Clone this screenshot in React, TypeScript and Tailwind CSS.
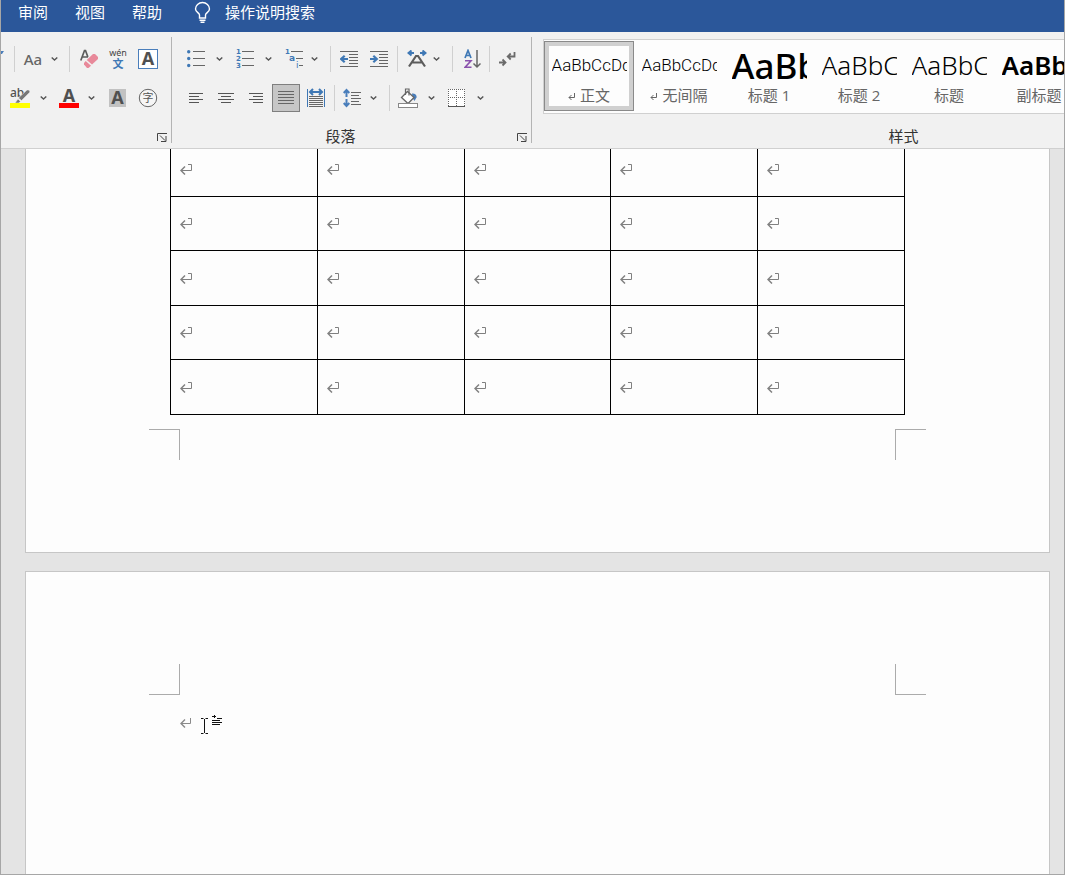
import type { ReactNode } from "react";
import clsx from "clsx";

const TABS = ["审阅", "视图", "帮助"];

const STYLES = [
  { name: "正文", sample: "AaBbCcDd", mark: true, selected: true, font: "font-[Roboto] text-[17px] font-light" },
  { name: "无间隔", sample: "AaBbCcDd", mark: true, font: "font-[Roboto] text-[17px] font-light" },
  { name: "标题 1", sample: "AaBbCc", font: "font-['Noto_Sans'] text-[35px] font-medium" },
  { name: "标题 2", sample: "AaBbCc", font: "font-['Noto_Sans'] text-[26px] font-light" },
  { name: "标题", sample: "AaBbCc", font: "font-['Noto_Sans'] text-[26px] font-light" },
  { name: "副标题", sample: "AaBbCc", font: "font-['Noto_Sans'] text-[26px] font-semibold" },
];

const ROWS = [47, 54, 55, 54, 55];

export default function App() {
  return (
    <div className="flex min-h-screen flex-col overflow-hidden border-x border-b border-[#a6a6a6] bg-[#e4e4e4] font-['Open_Sans','Noto_Sans_CJK_SC',sans-serif]">
      <MenuBar />
      <Ribbon />
      <Document />
    </div>
  );
}

function MenuBar() {
  return (
    <nav className="flex h-8 items-center bg-[#2b579a] pb-2 pl-[17px] text-[15px] leading-6 text-white">
      <div className="flex gap-[27px]">
        {TABS.map((tab) => (
          <button key={tab} type="button">
            {tab}
          </button>
        ))}
      </div>
      <button type="button" className="ml-8 flex items-center gap-[14px]">
        <svg width="17" height="22" viewBox="0 0 17 22" fill="none" stroke="white" strokeWidth="1.4">
          <path d="M5.5 17v-3C5.5 12 1.500 11 1.500 8a7 6.500 0 0 1 14 0c0 3-4 4-4 6V17z" />
          <path d="M5.500 19.300h6M6.500 21.300h4" />
        </svg>
        <span>操作说明搜索</span>
      </button>
    </nav>
  );
}

function Ribbon() {
  return (
    <div className="flex h-[117px] border-b border-[#d0d0d0] bg-[#f1f1f1] pt-[5px]">
      <FontGroup />
      <ParagraphGroup />
      <StylesGroup />
    </div>
  );
}

/* Font group */

function FontGroup() {
  return (
    <section className="h-[106px] w-[171px] shrink-0 border-r border-[#b4b4b4]">
      <div className="mt-2 flex h-7 items-center">
        <svg width="3" height="16" viewBox="0 0 3 16">
          <path d="M0 0h3L1 3H0z" fill="#4a7ebb" />
        </svg>
        <Separator className="ml-[10px]" />
        <Tool label="更改大小写" className="w-[36px]">
          <span className="font-['Noto_Sans'] text-[15px] font-medium leading-5 text-[#666]">Aa</span>
        </Tool>
        <Chevron label="大小写选项" className="w-[7px]" />
        <Separator className="ml-[11px]" />
        <Tool label="清除所有格式" className="ml-1 w-[30px]">
          <svg width="20" height="20" viewBox="0 0 20 20">
            <path d="M1.800 11.500L5.500 1.500h1l3.700 10M3.300 8h5.400" fill="none" stroke="#5c5c5c" strokeWidth="1.700" />
            <path d="M12.500 4L19.500 9.500l-9 9.500H7.500L3.500 15z" fill="#f1f1f1" />
            <path d="M14 5h2l3 3v2L13 15.500 7.700 10.900z" fill="#e8899a" />
            <path d="M6.700 12L12 16.700l-2.500 2.300H8l-3-3.500v-1.500z" fill="#e8899a" />
          </svg>
        </Tool>
        <Tool label="拼音指南" className="w-[28px]">
          <svg width="20" height="22" viewBox="0 0 20 22">
            <text x="10" y="8" textAnchor="middle" fontSize="9" fill="#444" fontFamily="Noto Sans">
              wén
            </text>
            <text x="10" y="20" textAnchor="middle" fontSize="11" fill="#3f78b5" fontWeight="700" fontFamily="Noto Sans CJK SC">
              文
            </text>
          </svg>
        </Tool>
        <Tool label="字符边框" className="w-8">
          <svg width="20" height="20" viewBox="0 0 20 20">
            <rect x="0.500" y="0.500" width="19" height="19" fill="#fff" stroke="#4a7ebb" />
            <LetterA x={10} y={16} />
          </svg>
        </Tool>
      </div>
      <div className="mt-[11px] flex h-7 items-center">
        <Tool label="文本突出显示颜色" className="ml-1 w-[30px]">
          <svg width="20" height="20" viewBox="0 0 20 20">
            <text x="0" y="9" fontSize="12" fill="#505050" fontWeight="500" fontFamily="Noto Sans">
              ab
            </text>
            <path d="M19 2l1 2-8.500 8.500-3-2.500L17 2zM8 11l2.500 2.500-2 1.500H5z" fill="#777" stroke="#f1f1f1" strokeWidth="0.500" />
            <rect y="15" width="20" height="5" fill="#ff0" />
          </svg>
        </Tool>
        <Chevron label="突出显示选项" className="w-[17px]" />
        <Tool label="字体颜色" className="w-[34px]">
          <svg width="20" height="20" viewBox="0 0 20 20">
            <LetterA x={10} y={14} />
            <rect y="15" width="20" height="5" fill="#f00" />
          </svg>
        </Tool>
        <Chevron label="字体颜色选项" className="w-[11px]" />
        <Tool label="字符底纹" className="ml-[6px] w-[28px]">
          <svg width="17" height="18" viewBox="0 0 17 18">
            <rect width="17" height="18" fill="#c2c2c2" />
            <LetterA x={8.5} y={15} />
          </svg>
        </Tool>
        <Tool label="带圈字符" className="ml-px w-8">
          <svg width="20" height="20" viewBox="0 0 20 20">
            <circle cx="10" cy="10" r="8.700" fill="#fff" fillOpacity="0.400" stroke="#666" />
            <text x="10" y="14" textAnchor="middle" fontSize="11" fill="#555" fontFamily="Noto Sans CJK SC">
              字
            </text>
          </svg>
        </Tool>
      </div>
      <GroupFooter />
    </section>
  );
}

function LetterA({ x, y }: { x: number; y: number }) {
  return (
    <text x={x} y={y} textAnchor="middle" fontSize="18" fontWeight="700" fill="#505050" fontFamily="Noto Sans">
      A
    </text>
  );
}

/* Paragraph group */

function ParagraphGroup() {
  return (
    <section className="h-[106px] w-[360px] shrink-0 border-r border-[#b4b4b4]">
      <div className="mt-2 flex h-7 items-center">
        <Tool label="项目符号" className="ml-2 w-8">
          <svg width="18" height="18" viewBox="0 0 18 18">
            <g fill="#3f78b5">
              <circle cx="1.700" cy="1.700" r="1.700" />
              <circle cx="1.700" cy="8.500" r="1.700" />
              <circle cx="1.700" cy="15.500" r="1.700" />
            </g>
            <path d="M6 1.500h12M6 8.500h12M6 15.500h12" stroke="#666" />
          </svg>
        </Tool>
        <Chevron label="项目符号选项" className="w-[14px]" />
        <Tool label="编号" className="ml-1 w-[30px]">
          <svg width="18" height="20" viewBox="0 0 18 20">
            <g fontSize="7" fontWeight="700" fill="#3f78b5" fontFamily="DejaVu Sans">
              <text x="0" y="5">1</text>
              <text x="0" y="12">2</text>
              <text x="0" y="19">3</text>
            </g>
            <path d="M6 2.500h12M6 9.500h12M6 16.500h12" stroke="#666" />
          </svg>
        </Tool>
        <Chevron label="编号选项" className="w-4" />
        <Tool label="多级列表" className="ml-1 w-[28px]">
          <svg width="19" height="20" viewBox="0 0 19 20">
            <g fontSize="9" fontWeight="700" fill="#3f78b5" fontFamily="DejaVu Sans">
              <text x="0" y="5" fontSize="7">1</text>
              <text x="4" y="12">a</text>
              <text x="11" y="19" fontWeight="400">i</text>
            </g>
            <path d="M6 2.500h12M11 9.500h7M14 16.500h4" stroke="#666" />
          </svg>
        </Tool>
        <Chevron label="多级列表选项" className="w-3" />
        <Separator className="ml-[10px]" />
        <Tool label="减少缩进量" className="ml-[3px] w-[30px]">
          <svg width="18" height="18" viewBox="0 0 18 18" fill="none">
            <path d="M0 1.500h18M9 4.500h9M9 7.500h9M9 10.500h9M9 13.500h9M0 16.500h18" stroke="#666" />
            <path d="M8 9H2M4.700 5.700L1.200 9l3.500 3.300" stroke="#3f78b5" strokeWidth="2.200" />
          </svg>
        </Tool>
        <Tool label="增加缩进量" className="w-[30px]">
          <svg width="18" height="18" viewBox="0 0 18 18" fill="none">
            <path d="M0 1.500h18M9 4.500h9M9 7.500h9M9 10.500h9M9 13.500h9M0 16.500h18" stroke="#666" />
            <path d="M0 9h6M3.300 5.700L6.800 9l-3.500 3.300" stroke="#3f78b5" strokeWidth="2.200" />
          </svg>
        </Tool>
        <Separator className="ml-[3px]" />
        <Tool label="中文版式" className="ml-1 w-[30px]">
          <svg width="20" height="18" viewBox="0 0 20 18" fill="none">
            <path d="M7 3H2M4.500 0.500L1.500 3l3 2.500M13 3h5M15.500 0.500l3 2.500-3 2.500" stroke="#3f78b5" strokeWidth="2" />
            <path d="M2 16.500L9 6h2l7 10.500M5 12.500h10" stroke="#5c5c5c" strokeWidth="2.200" />
          </svg>
        </Tool>
        <Chevron label="中文版式选项" className="w-2" />
        <Separator className="ml-3" />
        <Tool label="排序" className="ml-1 w-[30px]">
          <svg width="17" height="20" viewBox="0 0 17 20" fill="none">
            <path d="M1 9L4 1.500 7 9M2 6.500h4" stroke="#3f78b5" strokeWidth="1.700" />
            <path d="M1 11.800h6L1.200 18.200H7.500" stroke="#8a52ad" strokeWidth="1.600" />
            <path d="M13 1v17M9.500 14.500L13 18l3.500-3.500" stroke="#666" strokeWidth="1.500" />
          </svg>
        </Tool>
        <Separator className="ml-[2px]" />
        <Tool label="显示/隐藏编辑标记" className="ml-[2px] w-[30px]">
          <svg width="17" height="16" viewBox="0 0 17 16" fill="none" stroke="#6a6a6a" strokeWidth="1.800">
            <path d="M15.500 1v4.500H9M11.700 2.500L8.700 5.500l3 3M0 11.500h6M3.500 8.500l3 3-3 3" />
          </svg>
        </Tool>
      </div>
      <div className="mt-[11px] flex h-7 items-center">
        <Tool label="左对齐" className="ml-[9px] w-[30px]">
          <svg width="16" height="12" viewBox="0 0 16 12">
            <path d="M1 1.500h14M1 4.500h10M1 7.500h14M1 10.500h10" stroke="#555" />
          </svg>
        </Tool>
        <Tool label="居中" className="w-[30px]">
          <svg width="16" height="12" viewBox="0 0 16 12">
            <path d="M0 1.500h16M3 4.500h10M0 7.500h16M3 10.500h10" stroke="#555" />
          </svg>
        </Tool>
        <Tool label="右对齐" className="w-[30px]">
          <svg width="16" height="12" viewBox="0 0 16 12">
            <path d="M1 1.500h14M5 4.500h10M1 7.500h14M5 10.500h10" stroke="#555" />
          </svg>
        </Tool>
        <Tool label="两端对齐" className="ml-px w-7 border border-[#7f7f7f] bg-[#c6c6c6]">
          <svg width="16" height="14" viewBox="0 0 16 14">
            <path d="M0 0.500h16M0 3.500h16M0 6.500h16M0 9.500h16M0 12.500h16" stroke="#666" />
          </svg>
        </Tool>
        <Tool label="分散对齐" className="ml-px w-[30px]">
          <svg width="18" height="20" viewBox="0 0 18 20" fill="none">
            <path d="M0.500 1v18M17.500 1v18" stroke="#3f78b5" />
            <path d="M3 4h12M6 1L3 4l3 3M12 1l3 3-3 3" stroke="#3f78b5" strokeWidth="2" />
            <path d="M2 8.500h14M2 10.500h14M2 12.500h14M2 14.500h14M2 16.500h14M2 18.500h14" stroke="#666" />
          </svg>
        </Tool>
        <Separator className="ml-[3px]" />
        <Tool label="行和段落间距" className="ml-[2px] w-[30px]">
          <svg width="18" height="20" viewBox="0 0 18 20" fill="none">
            <path d="M3.500 2v16M0.700 5l2.800-3 2.800 3M0.700 15l2.800 3 2.800-3" stroke="#4a7ebb" strokeWidth="2" />
            <path d="M3.500 9v2" stroke="#f1f1f1" strokeWidth="3" />
            <path d="M8 4.500h10M8 7.500h8M8 10.500h10M8 13.500h8M8 16.500h10" stroke="#666" />
          </svg>
        </Tool>
        <Chevron label="行距选项" className="w-3" />
        <Separator className="ml-[10px]" />
        <Tool label="底纹" className="ml-[3px] w-[30px]">
          <svg width="20" height="20" viewBox="0 0 20 20" fill="none">
            <path d="M14 5.500c3 0 5 1.500 4.500 4L16.500 13l-2-3z" fill="#4a7ebb" />
            <path d="M9.500 3.500l6.500 6-6 6L3.500 9.500z" fill="#fff" stroke="#666" strokeWidth="1.300" />
            <path d="M7.500 7V1h3.500V7.500" stroke="#666" strokeWidth="1.200" />
            <rect x="0.500" y="15.500" width="19" height="4" fill="#fff" stroke="#888" />
          </svg>
        </Tool>
        <Chevron label="底纹选项" className="w-4" />
        <Tool label="边框" className="ml-[2px] w-[30px]">
          <svg width="17" height="18" viewBox="0 0 17 18">
            <rect width="17" height="18" fill="#fff" />
            <path d="M0 0.500h17M0 8.500h17M0.500 0v17M8.500 0v17M16.500 0v17" stroke="#666" strokeDasharray="1 1" />
            <path d="M0 17.500h17" stroke="#555" />
          </svg>
        </Tool>
        <Chevron label="边框选项" className="w-[18px]" />
      </div>
      <GroupFooter title="段落" />
    </section>
  );
}

/* Styles gallery, which runs past the right edge of the window */

function StylesGroup() {
  return (
    <section className="min-w-0 flex-1 overflow-hidden">
      <div className="w-[743px]">
        <div className="ml-[11px] mt-[2px] flex h-[75px] border border-[#d0d0d0] bg-[#fdfdfd] pt-px">
          {STYLES.map((style) => (
            <button
              key={style.name}
              type="button"
              className={clsx(
                "flex h-[70px] w-[90px] shrink-0 flex-col items-center border",
                style.selected ? "border-[#8a8a8a] ring-4 ring-inset ring-[#d0d0d0]" : "border-transparent",
              )}
            >
              <span className="mt-[3px] flex h-10 w-[75px] items-center overflow-hidden whitespace-nowrap text-black">
                <span className={clsx("leading-none", style.font)}>{style.sample}</span>
              </span>
              <span className="flex items-center gap-1 text-[15px] leading-5 text-[#666]">
                {style.mark && (
                  <svg width="8" height="8" viewBox="0 0 8 8" className="mt-1" fill="none" stroke="#666">
                    <path d="M6.500 0v4.500H1M3.500 2L1 4.500 3.500 7" />
                  </svg>
                )}
                {style.name}
              </span>
            </button>
          ))}
        </div>
        <div className="mt-3 text-center text-[15px] leading-5 text-[#333]">样式</div>
      </div>
    </section>
  );
}

function GroupFooter({ title }: { title?: string }) {
  return (
    <div className="mt-[14px] flex h-5 items-center">
      <div className="flex-1 pr-2 text-center text-[15px] leading-5 text-[#333]">{title}</div>
      <button type="button" aria-label="对话框启动器" className="mr-1 mt-[3px]">
        <svg width="10" height="9" viewBox="0 0 10 9" fill="none" stroke="#444">
          <path d="M0.500 8V0.500H10M3 2.500l5 5M9 3v5.500H4" />
        </svg>
      </button>
    </div>
  );
}

function Tool({ label, className, children }: { label: string; className: string; children: ReactNode }) {
  return (
    <button
      type="button"
      aria-label={label}
      className={clsx("flex h-7 shrink-0 items-center justify-center", className)}
    >
      {children}
    </button>
  );
}

function Chevron({ label, className }: { label: string; className: string }) {
  return (
    <Tool label={label} className={className}>
      <svg width="7" height="4" viewBox="0 0 7 4" fill="none" stroke="#555" strokeWidth="1.400">
        <path d="M0.700 0.500l2.800 2.500L6.300 0.500" />
      </svg>
    </Tool>
  );
}

function Separator({ className }: { className: string }) {
  return <span className={clsx("h-[26px] w-px shrink-0 bg-[#d0d0d0]", className)} />;
}

/* Pages */

function Document() {
  return (
    <main className="flex flex-1 flex-col gap-[18px] pl-6 pr-[14px]">
      <div className="border-x border-b border-[#c6c6c6] bg-[#fdfdfd] pb-[92px]">
        <div className="px-36">
          <table className="w-full table-fixed border-collapse">
            <tbody>
              {ROWS.map((height, row) => (
                <tr key={row} style={{ height }}>
                  {[0, 1, 2, 3, 4].map((col) => (
                    <td
                      key={col}
                      className={clsx("border border-black pb-[21px] pl-[9px] align-bottom", row === 0 && "border-t-0")}
                    >
                      <CellMark />
                    </td>
                  ))}
                </tr>
              ))}
            </tbody>
          </table>
        </div>
        <div className="mt-[14px] flex justify-between px-[123px]">
          <span className="size-[31px] border-r border-t border-[#ababab]" />
          <span className="size-[31px] border-l border-t border-[#ababab]" />
        </div>
      </div>

      <div className="flex-1 border-x border-t border-[#c6c6c6] bg-[#fdfdfd] pt-[92px]">
        <div className="flex justify-between px-[123px]">
          <span className="size-[31px] border-b border-r border-[#ababab]" />
          <span className="size-[31px] border-b border-l border-[#ababab]" />
        </div>
        <div className="mt-[19px] flex items-center gap-2 pl-[154px]">
          <svg width="12" height="11" viewBox="0 0 12 11" fill="none" stroke="#8a8a8a">
            <path d="M10.500 0v5.500H1" />
            <path d="M5 1.500L1 5.500l4 4" strokeWidth="1.400" />
          </svg>
          <svg width="24" height="20" viewBox="0 0 24 20" fill="none" stroke="#111">
            <path d="M1 4.500h2.500M5.500 4.500H8M4.500 5v14M1 19.500h2.500M5.500 19.500H8" />
            <path d="M12 2.500h4M14.500 1v3M17 4.500h5M12 6.500h8M12 8.500h10M12 10.500h8" />
          </svg>
        </div>
      </div>
    </main>
  );
}

function CellMark() {
  return (
    <svg className="block" width="12" height="11" viewBox="0 0 12 11" fill="none" stroke="#808080">
      <path d="M8 0.500h3.500V6.500H1" />
      <path d="M5 2.500L1 6.500l4 4" strokeWidth="1.500" />
    </svg>
  );
}
